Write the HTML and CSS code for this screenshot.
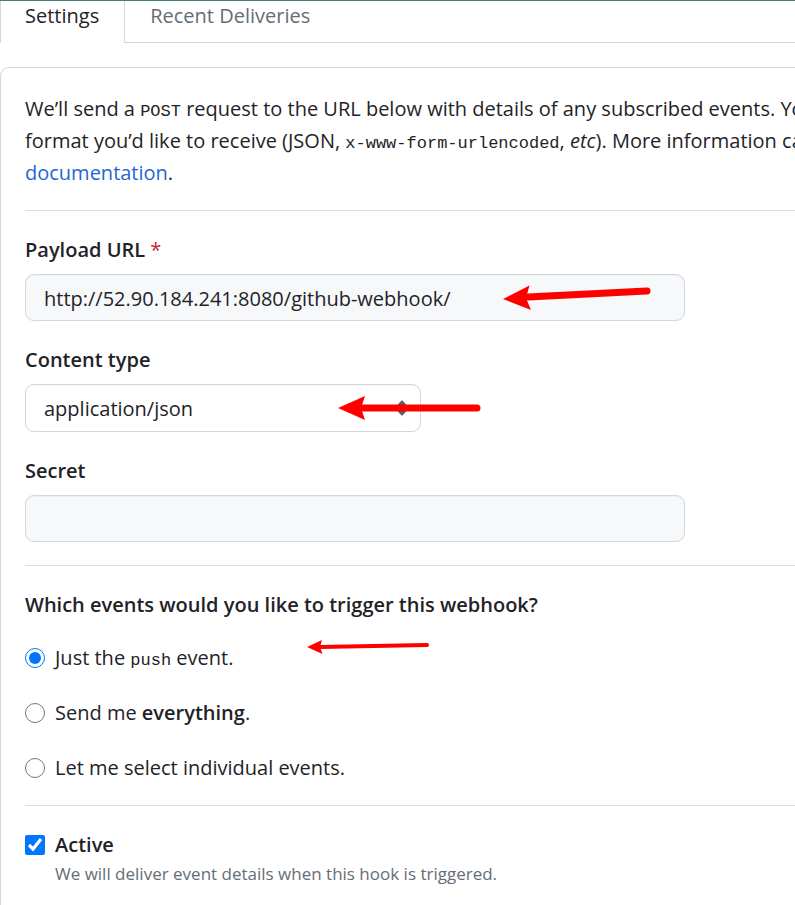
FILE: index.html
```html
<!DOCTYPE html>
<html lang="en">
<head>
<meta charset="utf-8">
<title>Webhook settings</title>
<link rel="stylesheet" href="styles.css">
</head>
<body>
<nav class="tabs">
  <a class="tab tab-current" href="#settings">Settings</a>
  <a class="tab" href="#deliveries">Recent Deliveries</a>
</nav>
<main class="panel" id="settings">
  <form class="form">
    <p class="intro">We’ll send a <code>POST</code> request to the URL below with details of any subscribed events. Yo<br>
    format you’d like to receive (JSON, <code>x-www-form-urlencoded</code>, <em>etc</em>). More information ca<br>
    <a class="link" href="#documentation">documentation</a>.</p>
    <hr class="rule">
    <div class="field">
      <label class="label" for="url">Payload URL <span class="required">*</span></label>
      <div class="control">
        <input class="input" id="url" type="text" value="http://52.90.184.241:8080/github-webhook/">
        <svg class="arrow arrow-url" width="150" height="30" viewBox="0 0 150 30" aria-hidden="true">
          <path d="M25 15L144 9" stroke="#f00" stroke-width="7" stroke-linecap="round"/>
          <path d="M0 17L26.500 3.500L23 16L28 28Z" fill="#f00"/>
        </svg>
      </div>
    </div>
    <div class="field">
      <label class="label" for="type">Content type</label>
      <div class="control control-select">
        <select class="input select" id="type"><option>application/json</option></select>
        <svg class="chevrons" width="10" height="16" viewBox="0 0 10 16" aria-hidden="true">
          <path d="M4.500 0.500h1L9.500 5v6L5.500 15.500h-1L.5 11V5z" fill="#57606a"/>
        </svg>
        <svg class="arrow arrow-type" width="144" height="30" viewBox="0 0 144 30" aria-hidden="true">
          <path d="M25 15H139" stroke="#f00" stroke-width="7" stroke-linecap="round"/>
          <path d="M0 15L27 3L23 15L27 27Z" fill="#f00"/>
        </svg>
      </div>
    </div>
    <div class="field">
      <label class="label" for="secret">Secret</label>
      <div class="control"><input class="input" id="secret" type="text"></div>
    </div>
    <hr class="rule">
    <fieldset class="events">
      <legend class="label">Which events would you like to trigger this webhook?</legend>
      <div class="choice">
        <input class="tick" type="radio" name="events" id="push" checked>
        <label for="push">Just the <code>push</code> event.</label>
        <svg class="arrow arrow-push" width="124" height="16" viewBox="0 0 124 16" aria-hidden="true">
          <path d="M13 8L120 6" stroke="#f00" stroke-width="4" stroke-linecap="round"/>
          <path d="M0 8L15 1L13 8L15.500 15Z" fill="#f00"/>
        </svg>
      </div>
      <div class="choice">
        <input class="tick" type="radio" name="events" id="all">
        <label for="all">Send me <strong>everything</strong>.</label>
      </div>
      <div class="choice">
        <input class="tick" type="radio" name="events" id="some">
        <label for="some">Let me select individual events.</label>
      </div>
    </fieldset>
    <hr class="rule">
    <div class="choice">
      <input class="tick" type="checkbox" id="active" checked aria-describedby="active-note">
      <label class="label" for="active">Active</label>
    </div>
    <p class="note" id="active-note">We will deliver event details when this hook is triggered.</p>
  </form>
</main>
</body>
</html>
```
FILE: styles.css
```css
* {
  box-sizing: border-box;
}

body {
  margin: 0;
  border-top: 1px solid #3f7f78;
  background: #fff;
  color: #1f2328;
  font: 20px/32px "Open Sans", "Noto Sans", sans-serif;
  overflow: hidden;
}

.tabs {
  display: flex;
  border-bottom: 1px solid #d0d7de;
}

.tab {
  padding: 0 25px 11px;
  color: #656d76;
  text-decoration: none;
  line-height: 30px;
}

.tab-current {
  margin-bottom: -1px;
  padding: 0 25px 12px 24px;
  border: solid #d0d7de;
  border-width: 0 1px;
  background: #fff;
  color: #1f2328;
}

.panel {
  margin-top: 24px;
  padding: 25px 0 24px 24px;
  border: solid #d0d7de;
  border-width: 1px 0 0 1px;
  border-radius: 9px 0 0 0;
}

.intro {
  margin: 0;
  white-space: nowrap;
}

code {
  font: 17px/20px "Liberation Mono", monospace;
}

.link {
  color: #1f66d6;
  text-decoration: none;
}

.rule {
  margin: 21px 0 23px;
  border: 0;
  border-top: 1px solid #d8dee4;
}

.field {
  display: grid;
  gap: 8px;
  margin-bottom: 23px;
}

.label,
strong {
  font-weight: 600;
}

.required {
  color: #cf222e;
  font-weight: 400;
}

.control {
  position: relative;
  display: grid;
  max-width: 660px;
}

.control-select {
  max-width: 396px;
}

.input {
  width: 100%;
  height: 47px;
  padding: 2px 18px 0;
  border: 1px solid #d0d7de;
  border-radius: 9px;
  background: #f6f8fa;
  box-shadow: inset 0 1px 0 rgba(208, 215, 222, 0.2);
  color: inherit;
  font: inherit;
}

.select {
  height: 48px;
  appearance: none;
  background: #fff;
}

.chevrons {
  position: absolute;
  top: 16px;
  right: 14px;
}

.arrow {
  position: absolute;
  fill: none;
  pointer-events: none;
}

.arrow-url {
  top: 8px;
  left: 478px;
}

.arrow-type {
  top: 9px;
  left: 313px;
}

.events {
  display: grid;
  gap: 23px;
  margin: 0;
  padding: 0;
  border: 0;
}

.events .label {
  padding: 0;
  margin-bottom: 21px;
}

.choice {
  position: relative;
  display: flex;
  align-items: center;
  gap: 10px;
}

.tick {
  width: 20px;
  height: 20px;
  margin: 0;
  accent-color: #0075ff;
}

.arrow-push {
  top: -3px;
  left: 282px;
}

.note {
  margin: 0 0 0 30px;
  color: #656d76;
  font-size: 17px;
  line-height: 26px;
}
```
